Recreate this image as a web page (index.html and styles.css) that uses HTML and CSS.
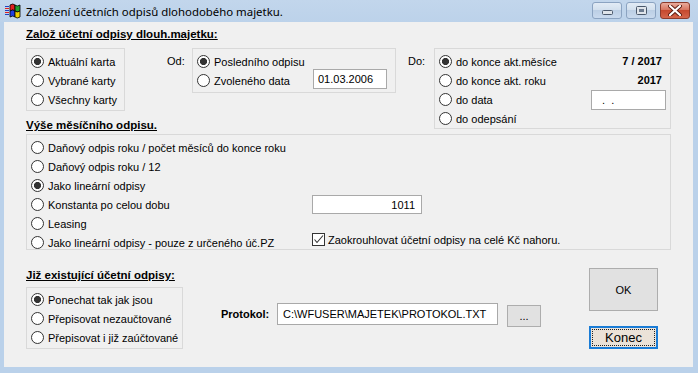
FILE: index.html
```html
<!DOCTYPE html>
<html lang="cs">
<head>
    <meta charset="UTF-8">
    <title>Založení účetních odpisů</title>
    <link rel="stylesheet" href="styles.css">
</head>
<body>
<div class="window">
    <div class="titlebar">
        <svg class="app-icon" viewBox="0 0 16 16">
            <rect x="0" y="3" width="4" height="1" fill="#2040c0"/>
            <rect x="0" y="5" width="4" height="1" fill="#e02020"/>
            <rect x="0" y="7" width="4" height="1" fill="#2040c0"/>
            <rect x="0" y="9" width="4" height="1" fill="#e02020"/>
            <rect x="0" y="11" width="4" height="1" fill="#2040c0"/>
            <path d="M5 2 Q8 0 10 2 L10 8 Q8 6 5 8 Z" fill="#e02020" stroke="#000" stroke-width="0.8"/>
            <path d="M10 2 Q12 4 15 2 L15 8 Q12 10 10 8 Z" fill="#20a030" stroke="#000" stroke-width="0.8"/>
            <path d="M5 8 Q8 6 10 8 L10 14 Q8 12 5 14 Z" fill="#2040e0" stroke="#000" stroke-width="0.8"/>
            <path d="M10 8 Q12 10 15 8 L15 14 Q12 16 10 14 Z" fill="#f0d000" stroke="#000" stroke-width="0.8"/>
        </svg>
        <span class="title">Založení účetních odpisů dlohodobého majetku.</span>
        <div class="caption-buttons">
            <span class="cap">
                <svg width="11" height="6" viewBox="0 0 11 6"><rect x="0.5" y="0.5" width="10" height="4" rx="1" fill="#dfe4ea" stroke="#4a586b"/></svg>
            </span>
            <span class="cap cap-max">
                <svg width="11" height="9" viewBox="0 0 11 9"><rect x="0.5" y="0.5" width="10" height="8" rx="1" fill="#dfe4ea" stroke="#4a586b"/><rect x="3" y="3" width="5" height="3" fill="#6b7a8f"/></svg>
            </span>
            <span class="cap cap-close">
                <svg width="14" height="11" viewBox="0 0 14 11"><path d="M2 1 L12 10 M12 1 L2 10" stroke="#5a1a10" stroke-width="4" stroke-linecap="round"/><path d="M2 1 L12 10 M12 1 L2 10" stroke="#fff" stroke-width="2.2" stroke-linecap="round"/></svg>
            </span>
        </div>
    </div>

    <div class="client">
        <div class="heading">Založ účetní odpisy dlouh.majetku:</div>
        <div class="row-top">
            <div class="group g-cards">
                <label class="opt"><input type="radio" name="karta" checked>Aktuální karta</label>
                <label class="opt"><input type="radio" name="karta">Vybrané karty</label>
                <label class="opt"><input type="radio" name="karta">Všechny karty</label>
            </div>
            <span class="side-label lbl-od">Od:</span>
            <div class="group g-od">
                <label class="opt"><input type="radio" name="od" checked>Posledního odpisu</label>
                <label class="opt"><input type="radio" name="od">Zvoleného data</label>
                <input class="field f-date" type="text" value="01.03.2006">
            </div>
            <span class="side-label lbl-do">Do:</span>
            <div class="group g-do">
                <label class="opt"><input type="radio" name="do" checked>do konce akt.měsíce</label>
                <span class="value">7 / 2017</span>
                <label class="opt"><input type="radio" name="do">do konce akt. roku</label>
                <span class="value">2017</span>
                <label class="opt"><input type="radio" name="do">do data</label>
                <input class="field f-until" type="text" value=".  .">
                <label class="opt"><input type="radio" name="do">do odepsání</label>
            </div>
        </div>

        <div class="heading h-rate">Výše měsíčního odpisu.</div>
        <div class="group g-rate">
            <label class="opt"><input type="radio" name="vyse">Daňový odpis roku / počet měsíců do konce roku</label>
            <label class="opt"><input type="radio" name="vyse">Daňový odpis roku / 12</label>
            <label class="opt"><input type="radio" name="vyse" checked>Jako lineární odpisy</label>
            <label class="opt"><input type="radio" name="vyse">Konstanta po celou dobu</label>
            <input class="field f-const extra" type="text" value="1011">
            <label class="opt"><input type="radio" name="vyse">Leasing</label>
            <label class="opt"><input type="radio" name="vyse">Jako lineární odpisy - pouze z určeného úč.PZ</label>
            <label class="check-opt extra">
                <span class="check"><svg width="11" height="11" viewBox="0 0 11 11"><polyline points="1.5,5.5 4,8.5 10,1.5" fill="none" stroke="#333" stroke-width="1.1"/></svg></span>
                Zaokrouhlovat účetní odpisy na celé Kč nahoru.
            </label>
        </div>

        <div class="row-bottom">
            <div class="col-existing">
                <div class="heading">Již existující účetní odpisy:</div>
                <div class="group g-existing">
                    <label class="opt"><input type="radio" name="exist" checked>Ponechat tak jak jsou</label>
                    <label class="opt"><input type="radio" name="exist">Přepisovat nezaučtované</label>
                    <label class="opt"><input type="radio" name="exist">Přepisovat i již zaúčtované</label>
                </div>
            </div>
            <div class="protokol">
                <span class="protokol-label">Protokol:</span>
                <input class="field f-path" type="text" value="C:\WFUSER\MAJETEK\PROTOKOL.TXT">
                <button class="btn btn-browse">...</button>
            </div>
            <div class="actions">
                <button class="btn btn-ok">OK</button>
                <button class="btn btn-end"><span>Konec</span></button>
            </div>
        </div>
    </div>
</div>
</body>
</html>
```

FILE: styles.css
```css
html, body {
    margin: 0;
    padding: 0;
}
body {
    width: 698px;
    height: 373px;
    overflow: hidden;
    font-family: "Liberation Sans", Arial, sans-serif;
    font-size: 11px;
    color: #000;
}
.window {
    width: 698px;
    height: 373px;
    background: #bad1ea;
    display: flex;
    flex-direction: column;
}
/* Title bar */
.titlebar {
    height: 22px;
    flex-shrink: 0;
    display: flex;
    align-items: center;
    padding: 0 8px 0 5px;
    background: linear-gradient(#c2d6ec, #bcd2ea);
}
.app-icon {
    width: 16px;
    height: 16px;
    margin-top: -1px;
}
.title {
    margin-left: 5px;
    font-family: "Noto Sans", sans-serif;
    font-size: 11.4px;
    color: #000;
}
.caption-buttons {
    margin-left: auto;
    align-self: flex-start;
    margin-top: 2px;
    display: flex;
    gap: 4px;
}
.cap {
    width: 30px;
    height: 17px;
    box-sizing: border-box;
    border: 1px solid #8ba3c1;
    border-radius: 3px;
    display: flex;
    align-items: center;
    justify-content: center;
    background: linear-gradient(#e2ebf5 0%, #d3e0ee 45%, #bccfe5 50%, #c9daee 100%);
}
.cap svg {
    display: block;
}
.cap:first-child svg {
    margin-top: 5px;
}
.cap-close {
    background: linear-gradient(#e8ab9c 0%, #d77560 45%, #c6492f 50%, #d4654b 100%);
    border-color: #8c3b2c;
}
/* Client area */
.client {
    flex: 1;
    margin: 0 5px 6px 4px;
    background: #f0f0f0;
    padding: 5px 0 0 22px;
}
.heading {
    font-size: 11.5px;
    font-weight: bold;
    line-height: 14px;
    text-decoration: underline;
}
.group {
    border: 1px solid #d9d9d9;
    box-sizing: border-box;
}
.opt {
    display: flex;
    align-items: center;
    height: 19px;
    gap: 4px;
    white-space: nowrap;
}
.opt input[type="radio"] {
    appearance: none;
    -webkit-appearance: none;
    width: 13px;
    height: 13px;
    margin: 0;
    border: 1px solid #333;
    border-radius: 50%;
    background: #fff;
    flex-shrink: 0;
}
.opt input[type="radio"]:checked {
    background: radial-gradient(circle, #333 0, #333 3.2px, #fff 3.9px);
}
.field {
    box-sizing: border-box;
    border: 1px solid #a9a9a9;
    background: #fff;
    font-family: "Liberation Sans", Arial, sans-serif;
    font-size: 11px;
    color: #000;
    margin: 0;
    padding: 0 4px;
    outline: none;
}
/* Top row */
.row-top {
    margin-top: 7px;
    height: 70px;
    display: flex;
    align-items: flex-start;
}
.g-cards {
    width: 99px;
    padding: 3px 0 1px 4px;
}
.side-label {
    line-height: 19px;
    margin-top: 4px;
}
.lbl-od {
    margin-left: 42px;
    width: 25px;
}
.lbl-do {
    margin-left: 12px;
    width: 26px;
}
.g-od {
    width: 204px;
    padding: 3px 0 2px 4px;
    display: grid;
    grid-template-columns: 116px 74px;
    grid-auto-rows: 19px;
}
.g-od .opt {
    grid-column: 1;
}
.f-date {
    grid-column: 2;
    height: 20px;
    align-self: center;
    margin-top: -3px;
}
.g-do {
    width: 237px;
    height: 81px;
    padding: 3px 4px 0 4px;
    display: grid;
    grid-template-columns: 1fr auto;
    grid-auto-rows: 19px;
}
.g-do .opt {
    grid-column: 1;
}
.value {
    grid-column: 2;
    font-weight: bold;
    text-align: right;
    line-height: 19px;
    padding-right: 4px;
}
.f-until {
    grid-column: 2;
    width: 75px;
    height: 20px;
    align-self: center;
    padding-left: 10px;
}
/* Rate group */
.h-rate {
    margin-top: 0;
}
.g-rate {
    width: 645px;
    height: 116px;
    margin-top: 2px;
    padding: 3px 0 0 4px;
    display: grid;
    grid-template-columns: 281px 1fr;
    grid-template-rows: repeat(5, 19px) 18px;
}
.g-rate .opt {
    grid-column: 1;
}
.extra {
    grid-column: 2;
}
.f-const {
    width: 110px;
    height: 19px;
    align-self: center;
    text-align: right;
    padding-right: 6px;
}
.check-opt {
    display: flex;
    align-items: center;
    gap: 3px;
    margin-top: -5px;
    white-space: nowrap;
}
.check {
    width: 13px;
    height: 13px;
    box-sizing: border-box;
    border: 1px solid #333;
    background: #fff;
    display: flex;
    align-items: center;
    justify-content: center;
}
.check svg {
    display: block;
}
/* Bottom row */
.row-bottom {
    margin-top: 18px;
    display: flex;
    align-items: flex-start;
}
.col-existing {
    width: 157px;
}
.g-existing {
    margin-top: 5px;
    padding: 2px 0 1px 4px;
}
.protokol {
    margin-left: 38px;
    margin-top: 35px;
    display: flex;
    align-items: flex-start;
}
.protokol-label {
    width: 56px;
    font-weight: bold;
    line-height: 22px;
}
.f-path {
    width: 221px;
    height: 22px;
    padding-left: 5px;
}
.btn {
    box-sizing: border-box;
    border: 1px solid #adadad;
    background: #e1e1e1;
    font-family: "Liberation Sans", Arial, sans-serif;
    font-size: 11px;
    color: #000;
    padding: 0;
    margin: 0;
}
.btn-browse {
    width: 34px;
    height: 22px;
    margin-left: 9px;
    margin-top: 2px;
}
.actions {
    margin-left: 48px;
    display: flex;
    flex-direction: column;
    gap: 15px;
}
.btn-ok {
    width: 69px;
    height: 43px;
}
.btn-end {
    width: 69px;
    height: 23px;
    border: 2px solid #1a7cd6;
    background: #ebe2d8;
    padding: 1px;
    font-size: 13px;
}
.btn-end span {
    display: block;
    height: 100%;
    box-sizing: border-box;
    border: 1px dotted #222;
    line-height: 15px;
}
```
